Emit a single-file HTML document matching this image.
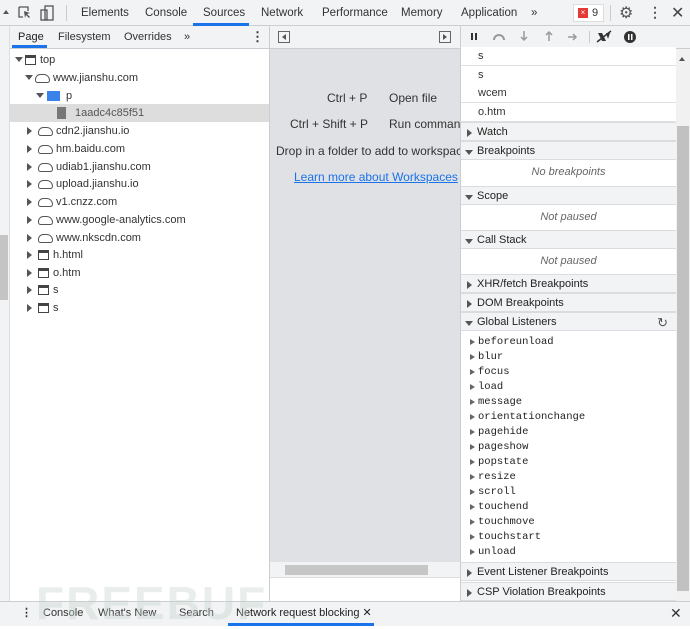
<!DOCTYPE html><html><head><style>
*{box-sizing:border-box;margin:0;padding:0}
body{width:690px;height:626px;overflow:hidden;font-family:"Liberation Sans",sans-serif;font-size:11px;color:#333;background:#fff;position:relative}
.a{position:absolute}
.hdr{background:#f1f3f4;border-bottom:1px solid #cacdd1}
.row{position:absolute;left:0;height:18px;line-height:18px;white-space:nowrap}
.sec{position:absolute;left:461px;width:215px;height:19px;line-height:19px;background:#f1f3f4;border-bottom:1px solid #dadce0;border-top:1px solid #dadce0;padding-left:16px;font-size:11px;color:#222}
.sec:before{content:"";position:absolute;left:6px;top:6px;border:4px solid transparent;border-left:5px solid #555}
.sec.o:before{left:4px;top:8px;border:4px solid transparent;border-top:5px solid #555}
.it{position:absolute;left:461px;width:215px;height:25px;line-height:25px;text-align:center;font-style:italic;color:#666}
.ls{position:absolute;left:478px;font-family:"Liberation Mono",monospace;font-size:10.5px;color:#222}
.ls:before{content:"";position:absolute;left:-8px;top:3px;border:3.5px solid transparent;border-left:5px solid #666}
.tri{display:inline-block;border:4px solid transparent;border-top:5px solid #555;vertical-align:middle;margin-top:3px}
.trr{display:inline-block;border:4px solid transparent;border-left:5px solid #555;vertical-align:middle;margin-left:2px}
.cloud{display:inline-block;width:15px;height:9px;border:1.5px solid #555;border-radius:6px 7px 3px 3px;vertical-align:middle;margin:0 3px 0 2px}
.frm{display:inline-block;width:11px;height:10px;border:1.5px solid #444;border-top-width:3px;vertical-align:middle;margin:0 4px 0 2px}
.wb{position:absolute;left:461px;width:215px;height:19px;line-height:19px;background:#fff;border-bottom:1px solid #e0e0e0;padding-left:17px}
</style></head><body>
<div class="a hdr" style="left:0;top:0;width:690px;height:26px"></div>
<div class="a" style="left:3px;top:7px;border:3px solid transparent;border-bottom:4px solid #555"></div>
<svg class="a" style="left:17px;top:5px" width="44" height="16"><path d="M2 2h9v4M2 2v10h4" fill="none" stroke="#555" stroke-width="1.3"/><path d="M7 6l6 2-3 1 3 3-1 1-3-3-1 3z" fill="#555"/><rect x="24" y="5" width="6" height="10" fill="none" stroke="#555" stroke-width="1.3"/><rect x="28" y="1" width="8" height="14" fill="none" stroke="#555" stroke-width="1.3"/></svg>
<div class="a" style="left:66px;top:5px;width:1px;height:16px;background:#ccc"></div>
<div class="a" style="top:0;left:0;height:26px;line-height:26px;font-size:11.5px;color:#333;width:690px">
<span class="a" style="left:81px">Elements</span><span class="a" style="left:145px">Console</span><span class="a" style="left:203px">Sources</span><span class="a" style="left:261px">Network</span><span class="a" style="left:322px">Performance</span><span class="a" style="left:401px">Memory</span><span class="a" style="left:461px">Application</span><span class="a" style="left:531px">»</span></div>
<div class="a" style="left:193px;top:23px;width:56px;height:3px;background:#1a73e8"></div>
<div class="a" style="left:573px;top:4px;width:31px;height:18px;border:1px solid #ddd;background:#fff;line-height:16px;font-size:11px;padding-left:18px">9</div>
<div class="a" style="left:578px;top:8px;width:10px;height:10px;background:#e53935;color:#fff;font-size:8px;line-height:10px;text-align:center">×</div>
<div class="a" style="left:610px;top:5px;width:1px;height:16px;background:#ccc"></div>
<div class="a" style="left:619px;top:3px;font-size:16px;color:#555">⚙</div>
<div class="a" style="left:648px;top:4px;font-size:14px;color:#555;font-weight:bold">⋮</div>
<div class="a" style="left:671px;top:3px;font-size:16px;color:#444">✕</div>
<div class="a" style="left:0;top:26px;width:10px;height:576px;background:#f1f3f4;border-right:1px solid #ddd"></div>
<div class="a" style="left:0;top:235px;width:8px;height:65px;background:#c4c4c4"></div>
<div class="a hdr" style="left:10px;top:26px;width:260px;height:23px;border-right:1px solid #cacdd1"></div>
<div class="a" style="top:26px;height:22px;line-height:22px;font-size:11px;left:0;width:270px"><span class="a" style="left:18px;color:#222">Page</span><span class="a" style="left:58px">Filesystem</span><span class="a" style="left:124px">Overrides</span><span class="a" style="left:184px">»</span><span class="a" style="left:251px;font-weight:bold;font-size:13px">⋮</span></div>
<div class="a" style="left:12px;top:45px;width:35px;height:3px;background:#1a73e8"></div>
<div class="a" style="left:10px;top:49px;width:260px;height:553px;border-right:1px solid #cacdd1"></div>
<div class="a" style="left:10px;top:104px;width:259px;height:18px;background:#dddddd"></div>
<div class="row" style="left:15px;top:51px"><span class="tri"></span><span class="frm"></span>top</div>
<div class="row" style="left:25px;top:69px"><span class="tri"></span><span class="cloud"></span>www.jianshu.com</div>
<div class="row" style="left:36px;top:87px"><span class="tri"></span><span style="display:inline-block;width:13px;height:10px;background:#3b82e8;vertical-align:middle;margin:0 6px 0 3px"></span>p</div>
<div class="row" style="left:57px;top:104px;color:#555"><span style="display:inline-block;width:9px;height:12px;background:#777;vertical-align:middle;margin-right:9px"></span>1aadc4c85f51</div>
<div class="row" style="left:25px;top:122px"><span class="trr"></span><span class="cloud"></span>cdn2.jianshu.io</div>
<div class="row" style="left:25px;top:140px"><span class="trr"></span><span class="cloud"></span>hm.baidu.com</div>
<div class="row" style="left:25px;top:158px"><span class="trr"></span><span class="cloud"></span>udiab1.jianshu.com</div>
<div class="row" style="left:25px;top:175px"><span class="trr"></span><span class="cloud"></span>upload.jianshu.io</div>
<div class="row" style="left:25px;top:193px"><span class="trr"></span><span class="cloud"></span>v1.cnzz.com</div>
<div class="row" style="left:25px;top:211px"><span class="trr"></span><span class="cloud"></span>www.google-analytics.com</div>
<div class="row" style="left:25px;top:229px"><span class="trr"></span><span class="cloud"></span>www.nkscdn.com</div>
<div class="row" style="left:25px;top:246px"><span class="trr"></span><span class="frm"></span>h.html</div>
<div class="row" style="left:25px;top:264px"><span class="trr"></span><span class="frm"></span>o.htm</div>
<div class="row" style="left:25px;top:281px"><span class="trr"></span><span class="frm"></span>s</div>
<div class="row" style="left:25px;top:299px"><span class="trr"></span><span class="frm"></span>s</div>
<div class="a hdr" style="left:270px;top:26px;width:190px;height:23px"></div>
<div class="a" style="left:278px;top:31px;width:12px;height:12px;border:1px solid #666"></div><div class="a" style="top:34px;border:3px solid transparent;border-right:4px solid #555;left:279px"></div>
<div class="a" style="left:439px;top:31px;width:12px;height:12px;border:1px solid #666"></div><div class="a" style="left:443px;top:34px;border:3px solid transparent;border-left:4px solid #555"></div>
<div class="a" style="left:270px;top:49px;width:191px;height:513px;background:#dfe1e5;overflow:hidden;font-size:12px;color:#333;white-space:nowrap">
<span class="a" style="left:57px;top:42px">Ctrl + P</span><span class="a" style="left:119px;top:42px">Open file</span>
<span class="a" style="left:20px;top:68px">Ctrl + Shift + P</span><span class="a" style="left:119px;top:68px">Run command</span>
<span class="a" style="left:6px;top:95px">Drop in a folder to add to workspace</span>
<span class="a" style="left:24px;top:121px;color:#1a73e8;text-decoration:underline">Learn more about Workspaces</span></div>
<div class="a" style="left:270px;top:562px;width:191px;height:16px;background:#f1f3f4;border-bottom:1px solid #ddd"></div>
<div class="a" style="left:285px;top:565px;width:143px;height:10px;background:#c6c6c6"></div>
<div class="a hdr" style="left:460px;top:26px;width:230px;height:23px;border-left:1px solid #cacdd1"></div>
<svg class="a" style="left:466px;top:29px" width="180" height="16"><rect x="5" y="4" width="2" height="7" fill="#333"/><rect x="9" y="4" width="2" height="7" fill="#333"/><path d="M28 11a5 5 0 0 1 10 0" fill="none" stroke="#999" stroke-width="2"/><path d="M58 2v8M55 8l3 3 3-3" fill="none" stroke="#999" stroke-width="1.5"/><path d="M83 12v-9M80 6l3-3 3 3" fill="none" stroke="#999" stroke-width="1.5"/><path d="M102 8h8M107 5l3 3-3 3" fill="none" stroke="#999" stroke-width="1.5"/><rect x="123" y="2" width="1" height="12" fill="#ccc"/><path d="M132 4h4l4 8h-4zM140 4h4l-2 6z" fill="#333"/><path d="M131 13l14-11" stroke="#333" stroke-width="1.5"/><circle cx="164" cy="8" r="6" fill="#333"/><rect x="162" y="5" width="1.5" height="6" fill="#fff"/><rect x="165" y="5" width="1.5" height="6" fill="#fff"/></svg>
<div class="a" style="left:460px;top:49px;width:1px;height:553px;background:#cacdd1"></div>
<div class="wb" style="top:47px">s</div><div class="wb" style="top:66px">s</div><div class="wb" style="top:84px">wcem</div><div class="wb" style="top:103px">o.htm</div>
<div class="sec" style="top:122px">Watch</div>
<div class="sec o" style="top:141px">Breakpoints</div>
<div class="it" style="top:160px">No breakpoints</div>
<div class="sec o" style="top:186px">Scope</div>
<div class="it" style="top:205px">Not paused</div>
<div class="sec o" style="top:230px">Call Stack</div>
<div class="it" style="top:249px">Not paused</div>
<div class="sec" style="top:274px">XHR/fetch Breakpoints</div>
<div class="sec" style="top:293px">DOM Breakpoints</div>
<div class="sec o" style="top:312px">Global Listeners<span class="a" style="right:8px;top:0;font-size:13px;color:#555">↻</span></div>
<div class="ls" style="top:336px">beforeunload</div><div class="ls" style="top:351px">blur</div><div class="ls" style="top:366px">focus</div><div class="ls" style="top:381px">load</div><div class="ls" style="top:396px">message</div><div class="ls" style="top:411px">orientationchange</div><div class="ls" style="top:426px">pagehide</div><div class="ls" style="top:441px">pageshow</div><div class="ls" style="top:456px">popstate</div><div class="ls" style="top:471px">resize</div><div class="ls" style="top:486px">scroll</div><div class="ls" style="top:501px">touchend</div><div class="ls" style="top:516px">touchmove</div><div class="ls" style="top:531px">touchstart</div><div class="ls" style="top:546px">unload</div>
<div class="sec" style="top:562px">Event Listener Breakpoints</div>
<div class="sec" style="top:582px">CSP Violation Breakpoints</div>
<div class="a" style="left:676px;top:49px;width:14px;height:553px;background:#f1f1f1"></div>
<div class="a" style="left:677px;top:126px;width:12px;height:465px;background:#c1c1c1"></div>
<div class="a" style="left:679px;top:54px;border:3px solid transparent;border-bottom:4px solid #555"></div>
<div class="a hdr" style="left:0;top:601px;width:690px;height:25px;border-top:1px solid #cacdd1;border-bottom:none"></div>
<div class="a" style="top:602px;left:0;width:690px;height:24px;line-height:23px;font-size:11px">
<span class="a" style="left:21px;font-weight:bold">⋮</span><span class="a" style="left:43px">Console</span><span class="a" style="left:98px">What's New</span><span class="a" style="left:179px">Search</span><span class="a" style="left:236px;color:#222">Network request blocking ✕</span><span class="a" style="left:670px;font-size:14px">✕</span></div>
<div class="a" style="left:228px;top:623px;width:146px;height:3px;background:#1a73e8"></div>
<div class="a" style="left:36px;top:580px;font-size:46px;font-weight:bold;color:rgba(200,210,205,0.4);letter-spacing:2px;line-height:46px;z-index:5">FREEBUF</div>
</body></html>
